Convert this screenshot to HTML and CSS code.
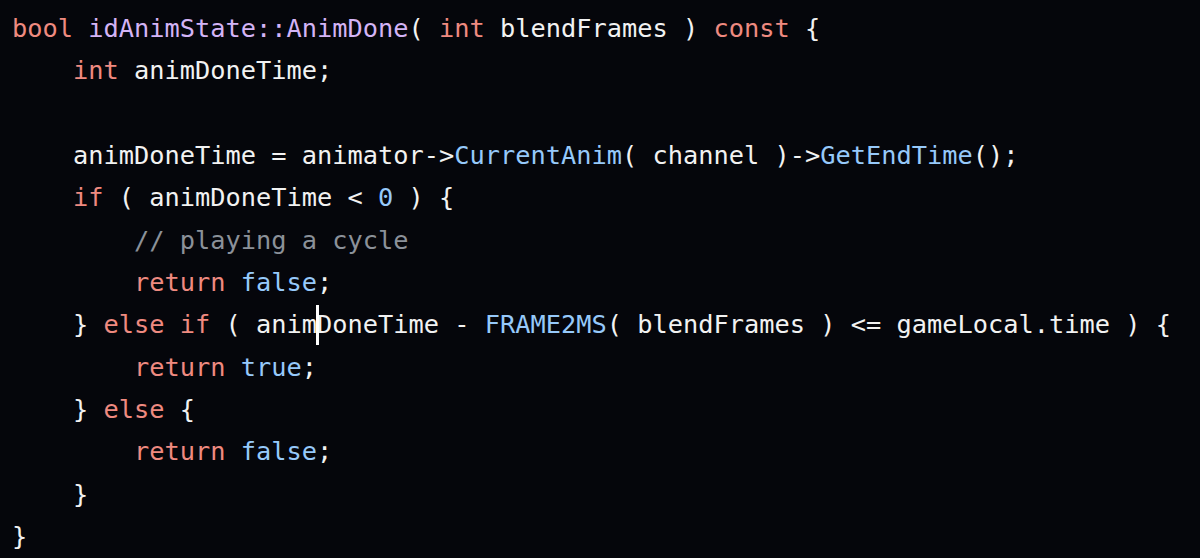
FILE: index.html
```html
<!DOCTYPE html>
<html>
<head>
<meta charset="utf-8">
<link rel="stylesheet" href="styles.css">
</head>
<body>
<pre class="code"><span class="k">bool</span> <span class="f">idAnimState::AnimDone</span>( <span class="k">int</span> blendFrames ) <span class="k">const</span> {
    <span class="k">int</span> animDoneTime;

    animDoneTime = animator-&gt;<span class="b">CurrentAnim</span>( channel )-&gt;<span class="b">GetEndTime</span>();
    <span class="k">if</span> ( animDoneTime &lt; <span class="b">0</span> ) {
        <span class="c">// playing a cycle</span>
        <span class="k">return</span> <span class="b">false</span>;
    } <span class="k">else if</span> ( anim<span class="cursor"></span>DoneTime - <span class="b">FRAME2MS</span>( blendFrames ) &lt;= gameLocal.time ) {
        <span class="k">return</span> <span class="b">true</span>;
    } <span class="k">else</span> {
        <span class="k">return</span> <span class="b">false</span>;
    }
}</pre>
</body>
</html>
```

FILE: styles.css
```css
html, body {
  margin: 0;
  padding: 0;
  background: #05060b;
  overflow: hidden;
}
.code {
  margin: 0;
  padding: 7px 0 0 12px;
  font-family: "DejaVu Sans Mono", monospace;
  font-size: 25.33px;
  line-height: 42.33px;
  color: #f2f2f2;
  white-space: pre;
}
.k { color: #ef8a80; }
.f { color: #d4b4f6; }
.b { color: #96c9fa; }
.c { color: #8b9199; }
.cursor {
  position: relative;
}
.cursor::after {
  content: "";
  position: absolute;
  left: -1px;
  top: -4px;
  width: 3px;
  height: 40px;
  background: #ffffff;
}
```
